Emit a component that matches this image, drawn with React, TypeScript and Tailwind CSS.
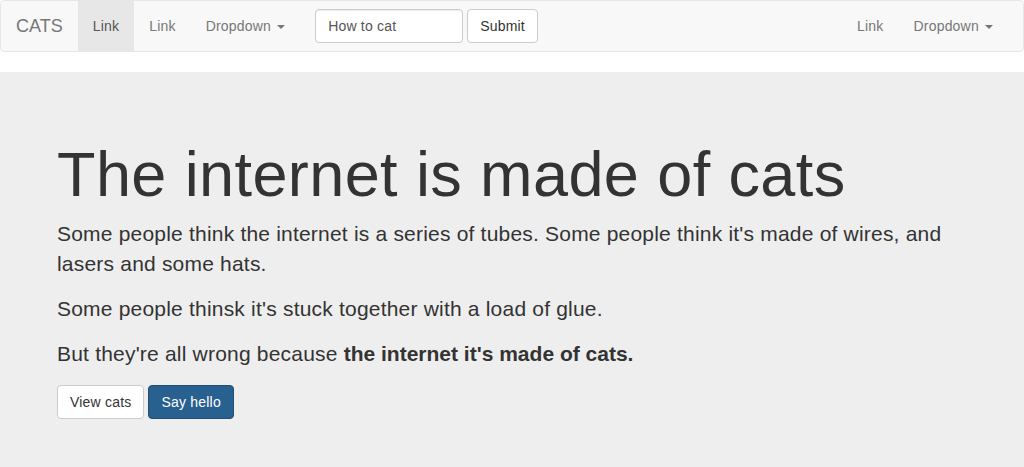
import React from "react";

function Caret() {
  return (
    <span className="ml-[2px] inline-block h-0 w-0 border-x-4 border-t-4 border-x-transparent border-t-[#777] align-middle" />
  );
}

export default function App() {
  return (
    <div
      className="min-h-[467px] bg-white text-[14px] leading-5 tracking-[0.2px] text-[#333]"
      style={{ fontFamily: '"Liberation Sans", Arial, sans-serif' }}
    >
      {/* navbar */}
      <nav className="flex h-[52px] rounded border border-[#e7e7e7] bg-[#f8f8f8]">
        <a className="px-[15px] py-[15px] text-[18px] leading-5 tracking-normal text-[#777]">CATS</a>
        <ul className="flex">
          <li className="bg-[#e7e7e7] px-[15px] py-[15px] text-[#555]">Link</li>
          <li className="px-[15px] py-[15px] text-[#777]">Link</li>
          <li className="px-[15px] py-[15px] text-[#777]">
            Dropdown <Caret />
          </li>
        </ul>
        <form className="flex items-start gap-1 px-[15px] pt-2">
          <input
            readOnly
            value="How to cat"
            className="h-[34px] w-[148px] rounded border border-[#ccc] bg-white px-3 py-[6px] text-[14px] tracking-[0.2px] text-[#555] shadow-[inset_0_1px_1px_rgba(0,0,0,0.075)] outline-none"
          />
          <button
            type="button"
            className="h-[34px] rounded border border-[#ccc] bg-white px-3 text-[14px] text-[#333]"
          >
            Submit
          </button>
        </form>
        <ul className="ml-auto flex pr-[15px]">
          <li className="px-[15px] py-[15px] text-[#777]">Link</li>
          <li className="px-[15px] py-[15px] text-[#777]">
            Dropdown <Caret />
          </li>
        </ul>
      </nav>

      {/* jumbotron */}
      <section className="mt-5 bg-[#eee] pb-12 pl-[57px] pr-[56px] pt-12">
        <h1 className="mb-[10px] mt-5 text-[63px] font-normal leading-[1.1] tracking-[0.4px]">
          The internet is made of cats
        </h1>
        <p className="mb-[15px] text-[21px] leading-[30px]">
          Some people think the internet is a series of tubes. Some people think it's made of wires, and lasers and
          some hats.
        </p>
        <p className="mb-[15px] text-[21px] leading-[30px]">
          Some people thinsk it's stuck together with a load of glue.
        </p>
        <p className="mb-[15px] text-[21px] leading-[30px]">
          But they're all wrong because{" "}
          <strong className="font-bold tracking-normal">the internet it's made of cats.</strong>
        </p>
        <p className="flex gap-1 pt-[1px]">
          <button
            type="button"
            className="h-[34px] rounded border border-[#ccc] bg-white px-3 text-[14px] text-[#333]"
          >
            View cats
          </button>
          <button
            type="button"
            className="h-[34px] rounded border border-[#204d74] bg-[#286090] px-3 text-[14px] text-white"
          >
            Say hello
          </button>
        </p>
      </section>
    </div>
  );
}
